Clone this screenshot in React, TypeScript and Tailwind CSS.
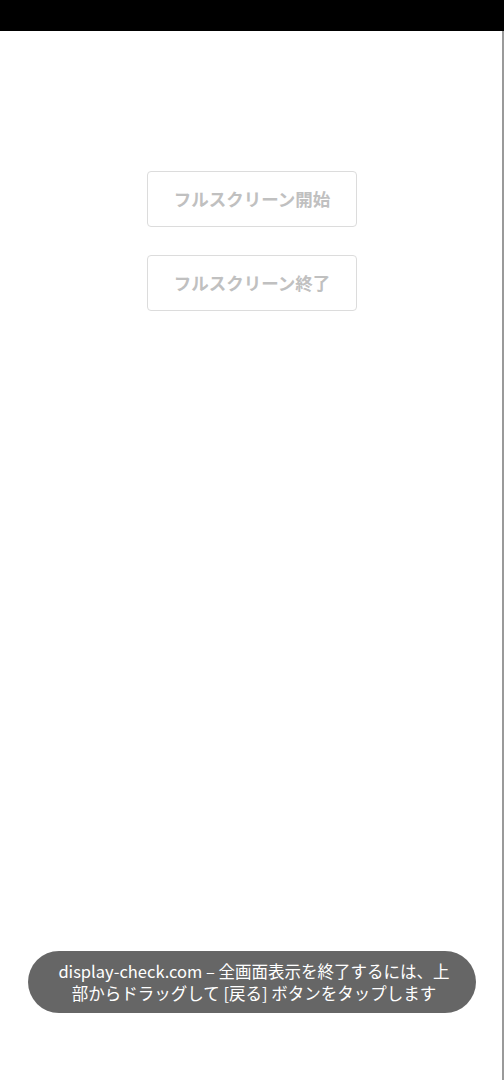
import React from "react";

export default function App() {
  const font = { fontFamily: '"Noto Sans CJK JP", Roboto, sans-serif' };
  return (
    <div className="w-[504px] h-[1080px] flex flex-col bg-white overflow-hidden" style={font}>
      <div className="h-[31px] bg-black shrink-0" />
      <div className="flex-1 flex">
        <div className="flex-1 flex flex-col relative">
          <div className="flex flex-col items-center gap-[28px] pt-[140px] pl-[2px]">
            <button className="w-[210px] h-[56px] border border-[#dcdcdc] rounded-[4px] text-[#c0c0c0] text-[17.5px] font-semibold bg-white">
              フルスクリーン開始
            </button>
            <button className="w-[210px] h-[56px] border border-[#dcdcdc] rounded-[4px] text-[#c0c0c0] text-[17.5px] font-semibold bg-white">
              フルスクリーン終了
            </button>
          </div>
          <div className="flex-1" />
          <div className="flex justify-center pb-[67px] pl-[2px]">
            <div className="w-[448px] h-[62px] rounded-full bg-[#666666] flex items-center justify-center text-white text-[16.5px] leading-[22px] text-center whitespace-nowrap pl-[4px]">
              <span>
                display-check.com – 全画面表示を終了するには、上
                <br />
                部からドラッグして [戻る] ボタンをタップします
              </span>
            </div>
          </div>
        </div>
        <div className="w-[2px] bg-[#9a9a9a]" />
      </div>
    </div>
  );
}
